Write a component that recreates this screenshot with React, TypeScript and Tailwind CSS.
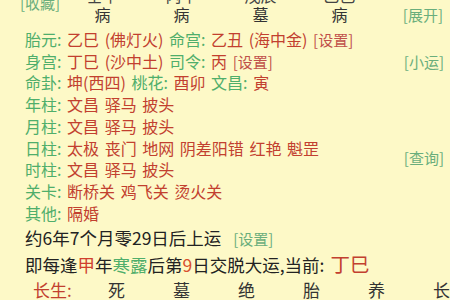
import React from "react";

const G = "text-[#4fae6b]";
const R = "text-[#c2402f]";
const LINK = "text-[15px] text-[#6aae7c]";

function Row({ label, children }: { label: string; children: React.ReactNode }) {
  return (
    <div className="whitespace-nowrap">
      <span className={G}>{label}: </span>
      <span className={R}>{children}</span>
    </div>
  );
}

export default function App() {
  const topCols = ["壬午", "丙午", "戊辰", "乙巳"];
  const stage = ["病", "病", "墓", "病"];
  const life = ["死", "墓", "绝", "胎", "养", "长"];
  return (
    <div className="w-[450px] h-[300px] overflow-hidden bg-[#fdf9c7] font-['Noto_Sans_CJK_SC',sans-serif] text-[16px] leading-[21.7px] text-[#333] [word-spacing:2px]">
      {/* pillar table */}
      <div className="-mt-[16px] grid grid-cols-[63px_79px_79px_79px_79px_1fr] grid-rows-[20px_22px] mb-[3px]">
        <div className="row-span-2 pl-[20px] pt-[8px]">
          <span className="text-[15px] leading-[20px] text-[#6aae7c]">[收藏]</span>
        </div>
        {topCols.map((t, i) => (
          <div key={"t" + i} className="flex items-end justify-center pb-[1px] leading-[16px] text-[#444]">
            {t}
          </div>
        ))}
        <div />
        {stage.map((t, i) => (
          <div key={"s" + i} className="flex items-center justify-center text-[#333]">
            {t}
          </div>
        ))}
        <div className={"flex items-center justify-end pr-[7px] " + LINK}>[展开]</div>
      </div>

      <div className="pl-[25px] pr-[6px]">
        <div className="whitespace-nowrap">
          <span className={G}>胎元: </span>
          <span className={R}>乙巳 (佛灯火) </span>
          <span className={G}>命宫: </span>
          <span className={R}>乙丑 (海中金) </span>
          <span className="text-[15px] text-[#c0504a]">[设置]</span>
        </div>
        <div className="flex justify-between whitespace-nowrap">
          <div>
            <span className={G}>身宫: </span>
            <span className={R}>丁巳 (沙中土) </span>
            <span className={G}>司令: </span>
            <span className={R}>丙 </span>
            <span className="text-[15px] text-[#c0504a]">[设置]</span>
          </div>
          <span className={LINK}>[小运]</span>
        </div>

        <div className="flex justify-between">
          <div>
            <div className="whitespace-nowrap">
              <span className={G}>命卦: </span>
              <span className={R}>坤(西四) </span>
              <span className={G}>桃花: </span>
              <span className={R}>酉卯 </span>
              <span className={G}>文昌: </span>
              <span className={R}>寅</span>
            </div>
            <Row label="年柱">文昌 驿马 披头</Row>
            <Row label="月柱">文昌 驿马 披头</Row>
            <Row label="日柱">太极 丧门 地网 阴差阳错 红艳 魁罡</Row>
            <Row label="时柱">文昌 驿马 披头</Row>
            <Row label="关卡">断桥关 鸡飞关 烫火关</Row>
            <Row label="其他">隔婚</Row>
          </div>
          <div className="pt-[75px]">
            <span className={LINK}>[查询]</span>
          </div>
        </div>

        <div className="mt-[1px] text-[17.5px] leading-[25px] text-[#222] whitespace-nowrap">
          约6年7个月零29日后上运 <span className="ml-[6px] text-[15px] text-[#6aae7c]">[设置]</span>
        </div>
        <div className="text-[17.5px] leading-[25px] text-[#222] whitespace-nowrap">
          即每逢<span className="text-[#d0402e]">甲</span>年<span className="text-[#4fae6b]">寒露</span>后第<span className="text-[#d8502e]">9</span>日交脱大运,当前: <span className="text-[19.5px] text-[#c2402f]">丁巳</span>
        </div>
        <div className="flex text-[17px] leading-[25px] text-[#333] whitespace-nowrap">
          <span className="w-[83px] shrink-0 pl-[8px] text-[#c2402f]">长生:</span>
          {life.map((t, i) => (
            <span key={i} className="w-[65px] shrink-0">
              {t}
            </span>
          ))}
        </div>
      </div>
    </div>
  );
}
